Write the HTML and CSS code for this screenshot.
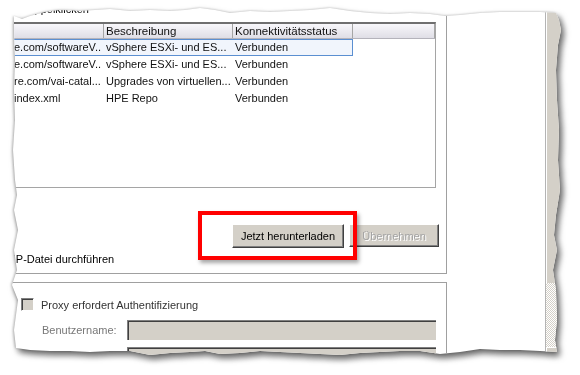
FILE: index.html
```html
<!DOCTYPE html>
<html lang="de">
<head>
    <meta charset="UTF-8">
    <meta name="viewport" content="width=device-width, initial-scale=1.0">
    <title>Download-Einstellungen</title>
    <link rel="stylesheet" href="styles.css">
</head>
<body>
    <div class="paper">
        <div class="sheet">
            <div class="dialog">
                <section class="group group-sources">
                    <div class="hint">Zum Bearbeiten doppelklicken</div>

                    <div class="list">
                        <div class="list-head">
                            <div class="col col-url"></div>
                            <div class="col col-desc">Beschreibung</div>
                            <div class="col col-state">Konnektivitätsstatus</div>
                            <div class="col col-rest"></div>
                        </div>
                        <div class="row selected">
                            <div class="col col-url">e.com/softwareV..</div>
                            <div class="col col-desc">vSphere ESXi- und ES...</div>
                            <div class="col col-state">Verbunden</div>
                        </div>
                        <div class="row">
                            <div class="col col-url">e.com/softwareV..</div>
                            <div class="col col-desc">vSphere ESXi- und ES...</div>
                            <div class="col col-state">Verbunden</div>
                        </div>
                        <div class="row">
                            <div class="col col-url">re.com/vai-catal...</div>
                            <div class="col col-desc">Upgrades von virtuellen...</div>
                            <div class="col col-state">Verbunden</div>
                        </div>
                        <div class="row">
                            <div class="col col-url">index.xml</div>
                            <div class="col col-desc">HPE Repo</div>
                            <div class="col col-state">Verbunden</div>
                        </div>
                    </div>

                    <div class="actions">
                        <button class="btn btn-download">Jetzt herunterladen</button>
                        <button class="btn" disabled>Übernehmen</button>
                    </div>

                    <div class="note">Import aus ZIP-Datei durchführen</div>
                </section>

                <section class="group group-proxy">
                    <label class="check-row">
                        <span class="checkbox"></span>
                        <span>Proxy erfordert Authentifizierung</span>
                    </label>
                    <div class="field">
                        <span class="field-label">Benutzername:</span>
                        <span class="field-input"></span>
                    </div>
                    <div class="field">
                        <span class="field-label"></span>
                        <span class="field-input"></span>
                    </div>
                </section>
            </div>

            <div class="gutter"></div>

            <div class="scrollbar">
                <div class="thumb"></div>
                <div class="track"></div>
                <div class="arrow"></div>
            </div>

            <div class="callout"></div>
        </div>
    </div>
</body>
</html>
```

FILE: styles.css
```css
body {
    margin: 0;
    width: 580px;
    height: 375px;
    overflow: hidden;
    background: #fff;
    font-family: "Liberation Sans", Arial, sans-serif;
    font-size: 11px;
    color: #000;
}

/* torn paper look */
.paper {
    filter: drop-shadow(3px 4px 3px rgba(0, 0, 0, 0.55)) drop-shadow(-1px 0 1px rgba(0, 0, 0, 0.25));
}

.sheet {
    position: relative;
    width: 580px;
    height: 375px;
    display: flex;
    background: #fff;
    overflow: hidden;
    clip-path: polygon(
        14px 16px, 22px 19px, 30px 16px, 45px 12px, 60px 10px, 80px 11px, 95px 10px, 110px 9px,
        130px 11px, 150px 10px, 170px 11px, 185px 10px, 200px 8px, 215px 10px, 230px 13px,
        250px 11px, 270px 12px, 290px 11px, 310px 10px, 330px 8px, 350px 11px, 370px 13px,
        390px 14px, 410px 13px, 430px 14px, 445px 16px, 460px 15px, 480px 13px, 500px 12px,
        520px 12px, 540px 12px, 556px 13px,
        559px 20px, 561px 30px, 558px 45px, 556px 70px, 557px 100px, 559px 130px, 558px 160px,
        560px 190px, 556px 215px, 554px 235px, 557px 250px, 553px 270px, 556px 290px,
        557px 320px, 555px 340px, 557px 352px,
        540px 351px, 520px 350px, 500px 350px, 480px 349px, 460px 352px, 440px 354px,
        420px 351px, 400px 351px, 380px 352px, 360px 353px, 340px 355px, 320px 354px,
        300px 353px, 280px 352px, 260px 351px, 240px 353px, 220px 354px, 205px 351px,
        190px 352px, 170px 353px, 150px 355px, 130px 351px, 110px 351px, 90px 352px,
        70px 351px, 50px 351px, 30px 350px, 16px 348px,
        14px 330px, 18px 300px, 12px 285px, 17px 270px, 14px 250px, 18px 230px, 14px 210px,
        17px 195px, 15px 180px, 13px 150px, 15px 120px, 14px 90px, 15px 60px, 14px 30px
    );
}

.dialog {
    flex: 0 0 507px;
    margin-left: -60px;
    display: flex;
    flex-direction: column;
}

.gutter {
    flex: 0 0 98px;
}

.group {
    box-sizing: border-box;
    border-right: 1px solid #a0a0a0;
    padding-right: 10px;
}

.group-sources {
    height: 274px;
    display: flex;
    flex-direction: column;
    border-bottom: 1px solid #a0a0a0;
}

.hint {
    height: 22px;
    box-sizing: border-box;
    padding: 2px 0 0 1px;
    line-height: 14px;
    white-space: nowrap;
}

/* list view */
.list {
    height: 166px;
    box-sizing: border-box;
    border-top: 2px solid #6f6f6f;
    border-right: 1px solid #a5a5a5;
    border-bottom: 1px solid #a5a5a5;
    color: #111;
}

.list-head {
    display: flex;
    height: 15px;
    box-sizing: border-box;
    background: linear-gradient(#f8f7fb, #dfdee6);
    border-bottom: 1px solid #b4b3bb;
    font-size: 11.5px;
    line-height: 14px;
}

.list-head .col {
    border-right: 1px solid #a5a5a5;
}

.list-head .col-rest {
    flex: 1;
}

.col {
    box-sizing: border-box;
    padding-left: 2px;
    white-space: nowrap;
    overflow: hidden;
}

.col-url {
    flex: 0 0 164px;
    padding-left: 74px;
}

.col-desc {
    flex: 0 0 129px;
}

.col-state {
    flex: 0 0 120px;
}

.row {
    display: flex;
    align-items: center;
    width: 413px;
    height: 17px;
    line-height: 15px;
}

.row.selected {
    background: #f1f5fc;
    box-shadow: inset 0 0 0 1px #5b8fd1;
}

/* buttons */
.actions {
    display: flex;
    justify-content: flex-end;
    gap: 5px;
    margin: 36px -3px 0 0;
}

.btn {
    width: 90px;
    height: 23px;
    padding: 0;
    font-family: inherit;
    font-size: 11px;
    color: #000;
    background: #d4d0c8;
    border: 1px solid;
    border-color: #fff #404040 #404040 #fff;
    box-shadow: inset -1px -1px #808080;
}

.btn-download {
    width: 112px;
    height: 24px;
}

.btn:disabled {
    color: #a3a3a3;
    text-shadow: 1px 1px #fff;
}

.note {
    margin-top: 4px;
    padding-left: 11px;
    line-height: 14px;
    white-space: nowrap;
}

/* proxy group */
.group-proxy {
    flex: 1;
    margin-top: 8px;
    border-top: 1px solid #a0a0a0;
}

.check-row {
    display: flex;
    align-items: center;
    gap: 7px;
    height: 13px;
    margin-top: 15px;
    padding-left: 81px;
    color: #333;
}

.checkbox {
    width: 13px;
    height: 13px;
    box-sizing: border-box;
    background: #d4d0c8;
    border: 1px solid;
    border-color: #808080 #fff #fff #808080;
    box-shadow: inset 1px 1px #404040;
}

.field {
    display: flex;
    align-items: center;
    height: 20px;
    margin-top: 9px;
    padding-left: 102px;
}

.field + .field {
    margin-top: 7px;
}

.field-label {
    flex: 0 0 85px;
    color: #777;
}

.field-input {
    flex: 1;
    height: 20px;
    box-sizing: border-box;
    background: #d4d0c8;
    border-top: 1px solid #808080;
    border-left: 1px solid #808080;
    box-shadow: inset 1px 1px #404040;
}

/* scrollbar on the right edge */
.scrollbar {
    flex: 0 0 20px;
    display: flex;
    flex-direction: column;
    border-left: 1px solid #b4b4b4;
}

.thumb {
    height: 283px;
    box-sizing: border-box;
    background: #d4d0c8;
    border-left: 1px solid #fff;
}

.track {
    height: 64px;
    background: repeating-conic-gradient(#d4d0c8 0 25%, #fff 0 50%) 0 0 / 2px 2px;
}

.arrow {
    flex: 1;
    background: #d4d0c8;
    border-top: 1px solid #fff;
    border-left: 1px solid #fff;
}

/* red highlight over the download button */
.callout {
    position: absolute;
    left: 198px;
    top: 211px;
    width: 159px;
    height: 49px;
    box-sizing: border-box;
    border: 4px solid #f00;
    box-shadow: 2px 3px 4px rgba(0, 0, 0, 0.35);
}
```
